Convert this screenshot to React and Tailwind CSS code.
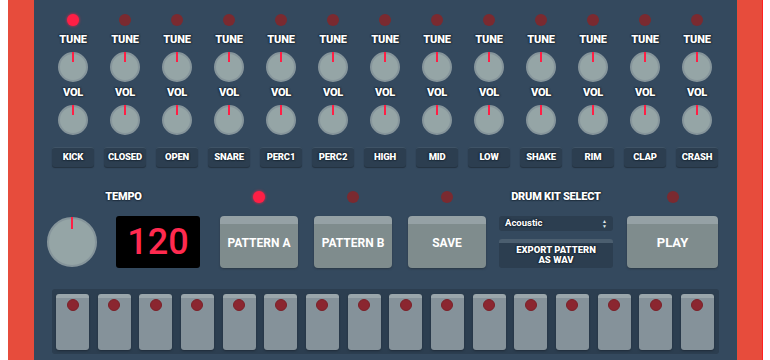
const instruments = ['KICK', 'CLOSED', 'OPEN', 'SNARE', 'PERC1', 'PERC2', 'HIGH', 'MID', 'LOW', 'SHAKE', 'RIM', 'CLAP', 'CRASH'];

const outline = '[text-shadow:0_0_1px_#16222d,0_0_1px_#16222d,0_0_2px_#16222d,0_0_2px_#16222d]';

function Led({ on, className = '' }) {
  return (
    <div
      className={`w-[12px] h-[12px] rounded-full ${
        on ? 'bg-[#ff1f45] shadow-[0_0_3px_#ff1f45]' : 'bg-[#7a2a30]'
      } ${className}`}
    />
  );
}

function Knob({ size = 'w-[30px] h-[30px]', tick = 'h-[10px]' }) {
  return (
    <div className={`relative ${size} rounded-full bg-[#95a5a6] border-2 border-[#86959b]`}>
      <div className={`absolute left-1/2 -translate-x-1/2 -top-[2px] w-[2px] ${tick} bg-[#ff1f45]`} />
    </div>
  );
}

function Label({ children, className = '' }) {
  return (
    <div className={`text-white font-black leading-[12px] text-[11px] tracking-[-0.2px] ${outline} ${className}`}>
      {children}
    </div>
  );
}

function Channel({ name, active }) {
  return (
    <div className="flex flex-col items-center w-[52px]">
      <Led on={active} />
      <Label className="mt-[8px]">TUNE</Label>
      <div className="mt-[6px]">
        <Knob />
      </div>
      <Label className="mt-[5px]">VOL</Label>
      <div className="mt-[6px]">
        <Knob />
      </div>
      <button className="mt-[12px] w-[42px] h-[20px] rounded-[3px] bg-[#2c3e50] border-t border-[#3f5366] shadow-[0_1px_1px_#23313f] text-white text-[9.5px] font-black tracking-[-0.2px]">
        <span className={outline}>{name}</span>
      </button>
    </div>
  );
}

function PadButton({ children, className = '' }) {
  return (
    <button
      className={`h-[52px] rounded-[4px] bg-[#7f8c8d] border-t-[8px] border-[#95a1a5] shadow-[0_1px_2px_#2a3846] text-white font-bold ${className}`}
    >
      <span className="relative -top-[3px]">{children}</span>
    </button>
  );
}

export default function App() {
  return (
    <div className="w-[770px] h-[360px] bg-white overflow-hidden font-['Roboto','Liberation_Sans',sans-serif]">
      <div className="ml-[8px] w-[755px] h-[360px] bg-[#e74c3c] border-r border-[#ff2020]">
        <div className="ml-[26px] w-[703px] h-[360px] bg-[#34495e] border-r border-[#2a5060]">
          <div className="flex pl-[13px] pt-[14px]">
            {instruments.map((name, i) => (
              <Channel key={name} name={name} active={i === 0} />
            ))}
          </div>

          <div className="flex items-start pl-[13px] mt-[24px]">
            <div className="flex flex-col items-center w-[153px]">
              <Label className="h-[12px]">TEMPO</Label>
              <div className="flex items-center gap-[19px] mt-[13px]">
                <Knob size="w-[50px] h-[50px]" tick="h-[12px]" />
                <div className="w-[84px] h-[52px] rounded-[3px] bg-black flex items-center justify-center text-[#ff2a4f] text-[36px] font-medium leading-none">
                  120
                </div>
              </div>
            </div>

            {['PATTERN A', 'PATTERN B', 'SAVE'].map((t, i) => (
              <div key={t} className={`flex flex-col items-center ${i === 0 ? 'ml-[20px]' : 'ml-[16px]'}`}>
                <Led on={i === 0} />
                <div className="mt-[13px]">
                  <PadButton className="w-[78px] text-[12px]">{t}</PadButton>
                </div>
              </div>
            ))}

            <div className="flex flex-col items-center ml-[13px] w-[114px]">
              <Label className="h-[12px] text-[10.5px]">DRUM KIT SELECT</Label>
              <div className="mt-[13px] w-[114px] h-[15px] rounded-[3px] bg-[#2c3e50] flex items-center justify-between px-[6px] text-white text-[9.5px] font-bold">
                <span className={outline}>Acoustic</span>
                <span className="flex flex-col items-center leading-none text-[5px] text-[#dfe6e9]">
                  <span>▲</span>
                  <span>▼</span>
                </span>
              </div>
              <button className="mt-[8px] w-[114px] h-[29px] rounded-[3px] bg-[#2c3e50] border-t-[4px] border-[#4b5e6f] text-white text-[9.5px] font-black leading-[10px]">
                <span className={`relative -top-[1px] ${outline}`}>
                  EXPORT PATTERN
                  <br />
                  AS WAV
                </span>
              </button>
            </div>

            <div className="flex flex-col items-center ml-[14px]">
              <Led />
              <div className="mt-[13px]">
                <PadButton className="w-[91px] text-[13px]">PLAY</PadButton>
              </div>
            </div>
          </div>

          <div className="ml-[18px] mt-[21px] w-[667px] h-[65px] rounded-[3px] bg-[#2c3e50] flex justify-between pl-[4px] pr-[5px] pt-[5px]">
            {Array.from({ length: 16 }).map((_, i) => (
              <div
                key={i}
                className="w-[33px] h-[56px] rounded-[3px] bg-[#85929a] border-t-[4px] border-[#9aa6ab] shadow-[0_1px_2px_#1f2b38] flex justify-center"
              >
                <div className="mt-[1px] w-[12px] h-[12px] rounded-full bg-[#8b2630] border border-[#7a2028]" />
              </div>
            ))}
          </div>
        </div>
      </div>
    </div>
  );
}
